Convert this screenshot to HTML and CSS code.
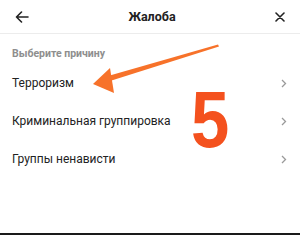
FILE: index.html
```html
<!DOCTYPE html>
<html lang="ru">
<head>
<meta charset="utf-8">
<link rel="stylesheet" href="styles.css">
</head>
<body>
<div class="screen">
  <header class="bar">
    <svg class="icon" width="14" height="12" viewBox="0 0 14 12"><path d="M13 6H1.5M6.5 1L1.5 6l5 5" fill="none" stroke="#222" stroke-width="1.6" stroke-linecap="round" stroke-linejoin="round"/></svg>
    <div class="title">Жалоба</div>
    <svg class="icon" width="10" height="10" viewBox="0 0 10 10"><path d="M1 1l8 8M9 1L1 9" fill="none" stroke="#222" stroke-width="1.6" stroke-linecap="round"/></svg>
  </header>
  <div class="label">Выберите причину</div>
  <div class="row"><span>Терроризм</span><svg class="chev" width="6" height="9" viewBox="0 0 6 9"><path d="M1 1l3.5 3.5L1 8" fill="none" stroke="#9a9a9a" stroke-width="1.3"/></svg></div>
  <div class="row"><span>Криминальная группировка</span><svg class="chev" width="6" height="9" viewBox="0 0 6 9"><path d="M1 1l3.5 3.5L1 8" fill="none" stroke="#9a9a9a" stroke-width="1.3"/></svg></div>
  <div class="row"><span>Группы ненависти</span><svg class="chev" width="6" height="9" viewBox="0 0 6 9"><path d="M1 1l3.5 3.5L1 8" fill="none" stroke="#9a9a9a" stroke-width="1.3"/></svg></div>
  <div class="spacer"></div>
  <svg class="annot" width="300" height="235" viewBox="0 0 300 235">
    <path d="M218 44.5 L108 76 L110 81 L219 46.5 Z" fill="#f7722a"/>
    <path d="M93 84 L110 68 L114 93 Z" fill="#f7722a"/>
  </svg>
  <div class="five">5</div>
</div>
</body>
</html>
```
FILE: styles.css
```css
html, body { margin: 0; padding: 0; background: #fff; }
body { font-family: Roboto, "Noto Sans", "Liberation Sans", sans-serif; color: #222; }
.screen { position: relative; width: 300px; height: 235px; display: flex; flex-direction: column; overflow: hidden; border-bottom: 2px solid #1a1a1a; box-sizing: border-box; }
.bar { height: 34px; flex: none; display: flex; align-items: center; justify-content: space-between; padding: 0 15px 0 15px; border-bottom: 1px solid #ececec; box-sizing: border-box; }
.icon { display: block; }
.title { font-size: 12.5px; font-weight: 700; color: #222; }
.label { padding: 12px 12px 2px; line-height: 16px; font-size: 10.5px; font-weight: 700; color: #8e8e8e; }
.row { height: 38px; flex: none; display: flex; align-items: center; justify-content: space-between; padding: 0 13px 0 12px; font-size: 12px; color: #222; }
.chev { display: block; }
.spacer { flex: 1; }
.annot { position: absolute; left: 0; top: 0; pointer-events: none; }
.five { position: absolute; left: 191px; top: 80px; font-family: "Liberation Sans", Arial, sans-serif; font-weight: 700; font-size: 80px; line-height: 80px; color: #f4511e; transform: scaleX(0.86); transform-origin: left top; }
```
